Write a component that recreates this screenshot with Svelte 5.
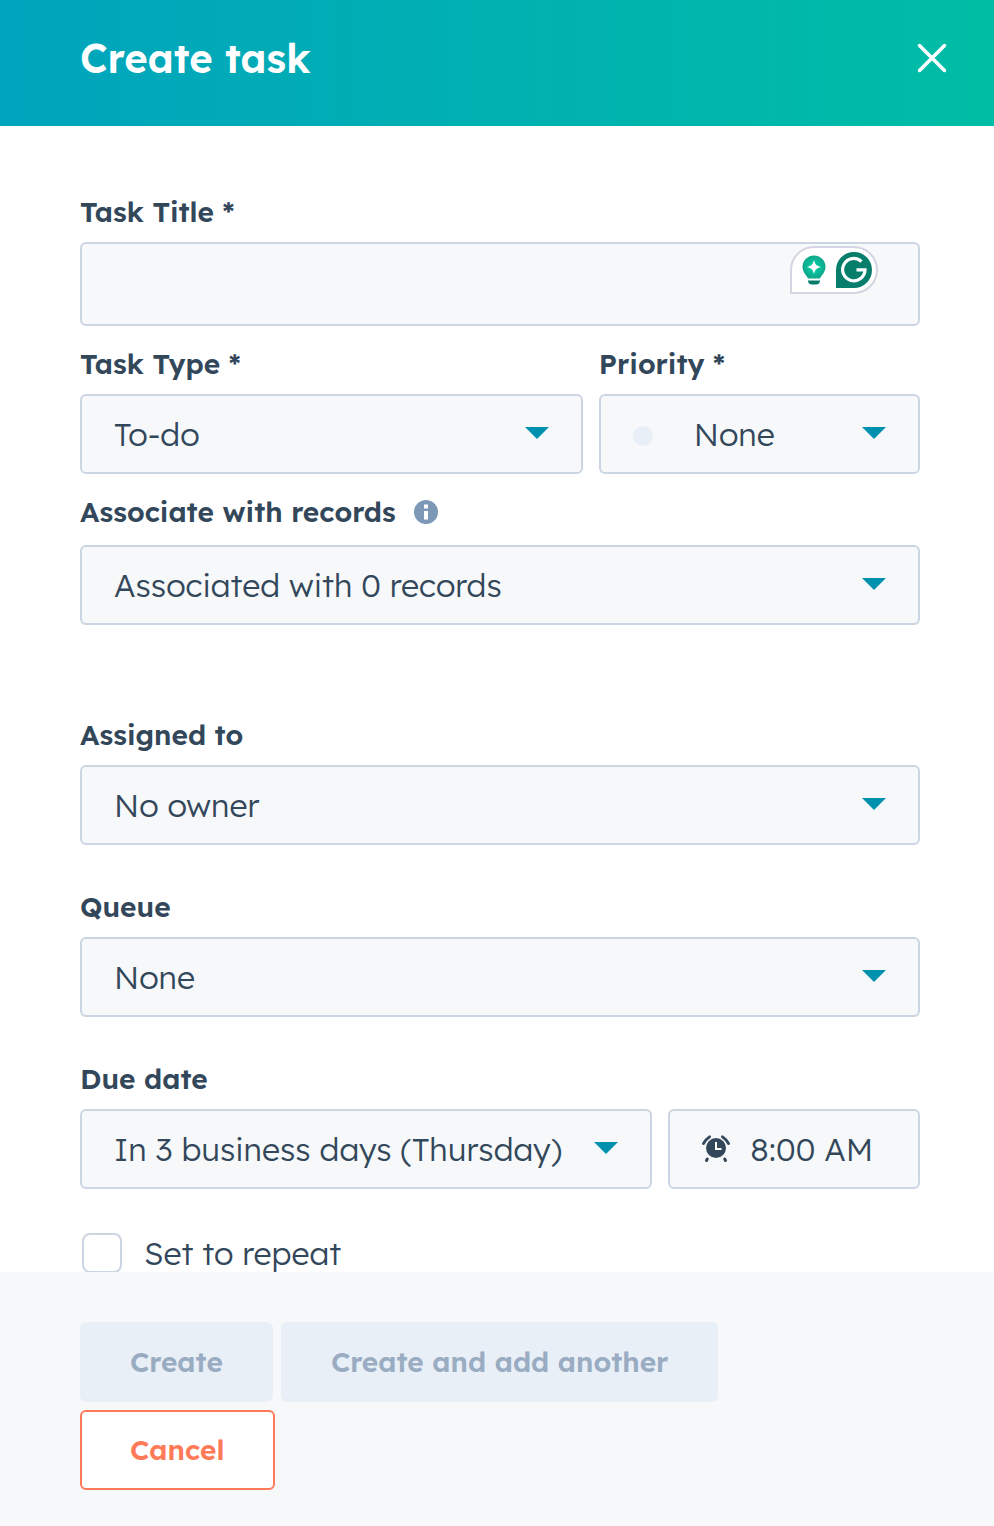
<script>
    let title = $state("");
    let type = $state("To-do");
    let priority = $state("None");
    let records = $state("Associated with 0 records");
    let owner = $state("No owner");
    let queue = $state("None");
    let due = $state("In 3 business days (Thursday)");
    let time = $state("8:00 AM");
    let repeat = $state(false);
</script>

{#snippet caret()}
    <svg class="caret" viewBox="0 0 24 12" aria-hidden="true">
        <path d="M0 0h24L12 12z" />
    </svg>
{/snippet}

<div class="panel">
    <header class="header">
        <h1>Create task</h1>
        <button class="close" type="button" aria-label="Close">
            <svg viewBox="0 0 28 28" aria-hidden="true">
                <path d="M1.5 1.5l25 25M26.5 1.5l-25 25" />
            </svg>
        </button>
    </header>

    <form class="body" id="task-form">
        <div class="field">
            <label for="title">Task Title *</label>
            <div class="control">
                <input class="box tall" id="title" type="text" bind:value={title} />
                <div class="assistant">
                    <svg class="bulb" viewBox="0 0 24 30" aria-hidden="true">
                        <defs>
                            <radialGradient id="glow">
                                <stop offset="0.4" stop-color="#06c39d" />
                                <stop offset="1" stop-color="#12a68c" />
                            </radialGradient>
                        </defs>
                        <path fill="url(#glow)" d="M12 .5a11.500 11.500 0 0 1 11.500 11.500c0 5-3.500 7.500-5.500 11.500H6C4 19.500.5 17 .5 12A11.500 11.500 0 0 1 12 .5z" />
                        <path class="white" d="M12 5c1.200 4.500 2.500 5.800 7 7-4.500 1.200-5.800 2.500-7 7-1.200-4.500-2.500-5.800-7-7 4.500-1.200 5.800-2.500 7-7z" />
                        <path class="green" d="M6 25.500h12c0 2.500-1.500 4-4 4h-4c-2.500 0-4-1.500-4-4z" />
                    </svg>
                    <svg class="mark" viewBox="0 0 36 36" aria-hidden="true">
                        <path class="green" d="M18 0a18 18 0 1 1 0 36H0V18A18 18 0 0 1 18 0z" />
                        <path class="ring" d="M25.500 9.500A11.200 11.200 0 1 0 29 17.800H20.500" />
                    </svg>
                </div>
            </div>
        </div>

        <div class="row type-row">
            <div class="field">
                <label for="type">Task Type *</label>
                <div class="control">
                    <select class="box" id="type" bind:value={type}>
                        <option>To-do</option>
                    </select>
                    {@render caret()}
                </div>
            </div>
            <div class="field">
                <label for="priority">Priority *</label>
                <div class="control">
                    <select class="box with-dot" id="priority" bind:value={priority}>
                        <option>None</option>
                    </select>
                    <span class="dot"></span>
                    {@render caret()}
                </div>
            </div>
        </div>

        <div class="field records">
            <div class="label-line">
                <label for="records">Associate with records</label>
                <svg class="info" viewBox="0 0 24 24" aria-hidden="true">
                    <circle cx="12" cy="12" r="12" />
                    <path d="M10 4.500h4v4h-4zM10 11h4v8.500h-4z" />
                </svg>
            </div>
            <div class="control">
                <select class="box" id="records" bind:value={records}>
                    <option>Associated with 0 records</option>
                </select>
                {@render caret()}
            </div>
        </div>

        <div class="field spaced">
            <label for="owner">Assigned to</label>
            <div class="control">
                <select class="box" id="owner" bind:value={owner}>
                    <option>No owner</option>
                </select>
                {@render caret()}
            </div>
        </div>

        <div class="field spaced">
            <label for="queue">Queue</label>
            <div class="control">
                <select class="box" id="queue" bind:value={queue}>
                    <option>None</option>
                </select>
                {@render caret()}
            </div>
        </div>

        <div class="field spaced">
            <label for="due">Due date</label>
            <div class="row due-row">
                <div class="control">
                    <select class="box" id="due" bind:value={due}>
                        <option>In 3 business days (Thursday)</option>
                    </select>
                    {@render caret()}
                </div>
                <div class="control">
                    <input class="box with-clock" type="text" aria-label="Due time" bind:value={time} />
                    <svg class="clock" viewBox="0 0 28 28" aria-hidden="true">
                        <circle cx="14" cy="13" r="10" />
                        <path class="feet" d="M5.300 24l-.8 1.500M22.700 24l.8 1.500" />
                        <path class="bells" d="M1.500 8.500Q3.500 4.500 7.500 1.800M26.500 8.500Q24.500 4.500 20.500 1.800" />
                        <path class="hands" d="M14 7v7h5.500" />
                    </svg>
                </div>
            </div>
        </div>

        <label class="repeat">
            <input type="checkbox" bind:checked={repeat} />
            Set to repeat
        </label>
    </form>

    <footer class="footer">
        <div class="submit">
            <button type="submit" form="task-form" disabled>Create</button>
            <button type="submit" form="task-form" disabled>Create and add another</button>
        </div>
        <button class="cancel" type="button">Cancel</button>
    </footer>
</div>

<style>
    :global(body) {
        margin: 0;
    }
    .panel {
        height: 100vh;
        display: flex;
        flex-direction: column;
        box-sizing: border-box;
        background: #fff;
        color: #33475b;
        font-family: "Lexend Deca", Inter, sans-serif;
        font-size: 32px;
        font-weight: 300;
    }
    .panel *, .panel *::before {
        box-sizing: border-box;
    }
    .header {
        flex: none;
        display: flex;
        align-items: center;
        justify-content: space-between;
        padding: 32px 48px 42px 80px;
        background: linear-gradient(to right, #00a4bd, #00bda5);
    }
    h1 {
        margin: 0;
        font-size: 40px;
        line-height: 52px;
        font-weight: 600;
        color: #fff;
    }
    .close {
        display: flex;
        padding: 0;
        border: 0;
        background: none;
        cursor: pointer;
    }
    .close svg {
        width: 28px;
        height: 28px;
        overflow: visible;
        stroke: #fff;
        stroke-width: 3.5;
        stroke-linecap: round;
    }
    .body {
        flex: 1;
        min-height: 0;
        overflow: hidden;
        padding: 68px 74px 0 80px;
        display: flex;
        flex-direction: column;
        gap: 20px;
    }
    .field {
        display: flex;
        flex-direction: column;
        gap: 12px;
        min-width: 0;
    }
    .field label {
        font-size: 28px;
        line-height: 36px;
        font-weight: 600;
    }
    .label-line {
        display: flex;
        align-items: center;
        gap: 18px;
    }
    .records {
        gap: 15px;
        margin-bottom: 72px;
    }
    .spaced {
        margin-bottom: 24px;
    }
    .row {
        display: grid;
        gap: 16px;
    }
    .type-row {
        grid-template-columns: 36fr 23fr;
    }
    .due-row {
        grid-template-columns: 25fr 11fr;
    }
    .control {
        position: relative;
        min-width: 0;
    }
    .box {
        display: block;
        width: 100%;
        height: 80px;
        margin: 0;
        padding: 0 32px;
        border: 2px solid #cbd6e2;
        border-radius: 6px;
        background: #f6f8fa;
        color: inherit;
        font: inherit;
        appearance: none;
    }
    .tall {
        height: 84px;
    }
    .with-dot {
        padding-left: 93px;
    }
    .with-clock {
        padding: 0 0 0 80px;
    }
    .caret {
        position: absolute;
        top: 33px;
        right: 34px;
        width: 24px;
        height: 12px;
        fill: #0091ae;
        pointer-events: none;
    }
    .dot {
        position: absolute;
        top: 32px;
        left: 34px;
        width: 20px;
        height: 20px;
        border-radius: 50%;
        background: #e8eff7;
        pointer-events: none;
    }
    .clock {
        position: absolute;
        top: 26px;
        left: 34px;
        width: 28px;
        height: 28px;
        fill: #33475b;
        pointer-events: none;
    }
    .clock path {
        fill: none;
        stroke: #33475b;
        stroke-width: 3;
        stroke-linecap: round;
    }
    .clock .bells {
        stroke-width: 2.8;
    }
    .clock .hands {
        stroke: #fff;
        stroke-width: 2;
        stroke-linecap: butt;
    }
    .info {
        width: 24px;
        height: 24px;
        fill: #7c98b6;
    }
    .info path {
        fill: #fff;
    }
    .assistant {
        position: absolute;
        top: 4px;
        right: 42px;
        display: flex;
        align-items: center;
        gap: 10px;
        height: 48px;
        padding: 0 4px 0 10px;
        border: 2px solid #d3d6e2;
        border-radius: 24px 24px 24px 0;
        background: #fff;
    }
    .bulb {
        width: 24px;
        height: 30px;
    }
    .mark {
        width: 36px;
        height: 36px;
    }
    .green {
        fill: #077d6c;
    }
    .white {
        fill: #fff;
    }
    .ring {
        fill: none;
        stroke: #fff;
        stroke-width: 3.2;
    }
    .repeat {
        flex: none;
        display: flex;
        align-items: center;
        gap: 22px;
        padding-left: 2px;
        line-height: 40px;
    }
    .repeat input {
        width: 40px;
        height: 40px;
        margin: 0;
        border: 2px solid #cbd6e2;
        border-radius: 8px;
        background: #fff;
        appearance: none;
    }
    .repeat input:checked {
        background: #00a4bd;
    }
    .footer {
        flex: none;
        display: flex;
        flex-direction: column;
        align-items: flex-start;
        gap: 8px;
        padding: 50px 74px 36px 80px;
        background: #f6f8fa;
    }
    .submit {
        display: flex;
        gap: 8px;
    }
    .footer button {
        height: 80px;
        padding: 0 48px 2px;
        border: 2px solid #e8eff7;
        border-radius: 6px;
        background: #e8eff7;
        color: #99acc2;
        font: inherit;
        font-size: 28px;
        font-weight: 600;
    }
    .footer .cancel {
        border-color: #ff7a59;
        background: #fff;
        color: #ff7a59;
        cursor: pointer;
    }
</style>
